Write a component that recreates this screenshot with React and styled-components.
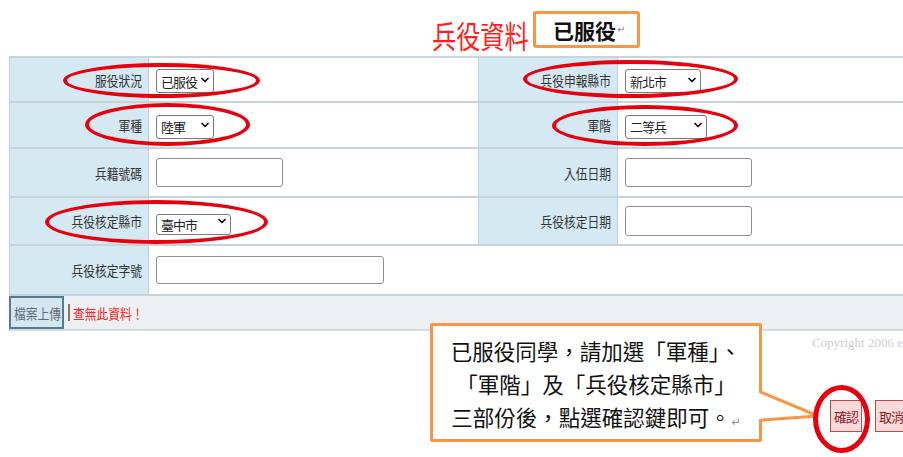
import React from 'react';
import styled, { createGlobalStyle } from 'styled-components';
import { ChevronDown } from 'lucide-react';

const GlobalStyle = createGlobalStyle`
  html, body {
    margin: 0;
    padding: 0;
    background: #fff;
  }
  body {
    font-family: "Noto Sans CJK TC", "Liberation Sans", sans-serif;
    overflow: hidden;
  }
`;

const Page = styled.div`
  position: relative;
  width: 903px;
  height: 457px;
  overflow: hidden;
`;

const Header = styled.header`
  display: flex;
  align-items: flex-end;
  gap: 9px;
  height: 56px;
  padding-left: 432px;
  box-sizing: border-box;
`;

/* the source shot is squeezed sideways, so narrow the glyphs the same way */
const Title = styled.h1`
  display: inline-block;
  margin: 0 -32px 3px 0;
  font-size: 31px;
  line-height: 36px;
  font-weight: 400;
  color: #ff1e1e;
  transform: scaleX(0.78);
  transform-origin: left center;
`;

const StatusBox = styled.div`
  display: flex;
  align-items: center;
  width: 107px;
  height: 37px;
  margin-bottom: 8px;
  padding-left: 17px;
  box-sizing: border-box;
  border: 3px solid #f79646;
  border-radius: 3px;
  font-size: 21px;
  font-weight: 700;
  color: #111;
`;

const Mark = styled.span`
  font-family: "DejaVu Sans", sans-serif;
  font-size: ${p => p.size || 10}px;
  font-weight: 400;
  color: #8a8a8a;
  margin-left: 1px;
`;

const Table = styled.div`
  margin-left: 9px;
  width: 920px;
  border-top: 2px solid #c9d5dc;
`;

const Row = styled.div`
  display: grid;
  grid-template-columns: 140px 329px 140px 1fr;
  height: ${p => p.h}px;
  box-sizing: border-box;
  border-bottom: 2px solid #c6d3da;
`;

const Label = styled.div`
  display: flex;
  align-items: center;
  justify-content: flex-end;
  padding-right: 6px;
  background: #d5e9f2;
  border-left: 1px solid #bdd1db;
  border-right: 1px solid #bdd1db;
`;

const Squeezed = styled.span`
  display: inline-block;
  white-space: nowrap;
  font-size: ${p => p.size || 14}px;
  color: ${p => p.color || '#333'};
  transform: scaleX(0.84);
  transform-origin: ${p => p.origin || 'right'} center;
`;

const Value = styled.div`
  display: flex;
  align-items: center;
  padding-left: 7px;
  background: #fff;
  grid-column: ${p => (p.wide ? 'span 3' : 'auto')};
`;

const SelectWrap = styled.span`
  position: relative;
  display: inline-block;
  width: ${p => p.w}px;
  height: ${p => p.h || 24}px;
`;

const SelectBox = styled.select`
  appearance: none;
  width: 100%;
  height: 100%;
  margin: 0;
  padding: 0 0 0 4px;
  box-sizing: border-box;
  border: 1px solid #7b7b7b;
  border-radius: 3px;
  background: #fff;
  font-family: "Noto Sans CJK TC", sans-serif;
  font-size: 13px;
  letter-spacing: -1px;
  color: #222;
`;

const Chevron = styled(ChevronDown)`
  position: absolute;
  right: 3px;
  top: 50%;
  margin-top: -6px;
  pointer-events: none;
`;

const TextInput = styled.input`
  width: ${p => p.w}px;
  height: ${p => p.h || 29}px;
  margin: 0;
  box-sizing: border-box;
  border: 1px solid #8e8e8e;
  border-radius: 3px;
  background: #fff;
`;

const Footer = styled.div`
  display: flex;
  align-items: center;
  height: 35px;
  box-sizing: border-box;
  background: #ecf0f3;
  border-bottom: 2px solid #d3dce1;
`;

const UploadButton = styled.button`
  width: 55px;
  height: 100%;
  padding: 0 0 0 3px;
  box-sizing: border-box;
  border: 2px solid #547b8f;
  background: #d4e6f0;
  font-family: "Noto Sans CJK TC", sans-serif;
  text-align: left;
`;

const Divider = styled.span`
  width: 2px;
  height: 17px;
  margin-left: 4px;
  background: #8b7660;
`;

const ErrorSlot = styled.span`
  margin-left: 3px;
  display: flex;
`;

const Copyright = styled.div`
  margin-top: 4px;
  padding-left: 812px;
  white-space: nowrap;
  font-family: "Liberation Serif", serif;
  font-size: 13px;
  line-height: 15px;
  color: #cfcfcf;
`;

const ButtonRow = styled.div`
  display: flex;
  gap: 13px;
  margin-top: 50px;
  padding-left: 830px;
`;

const ActionButton = styled.button`
  flex: none;
  width: 32px;
  height: 32px;
  padding: 0;
  border: 1px solid #b54a4a;
  background: #fdd9da;
  font-family: "Noto Sans CJK TC", sans-serif;
  font-size: 13px;
  letter-spacing: -1px;
  color: #8a1f1f;
`;

const Callout = styled.div`
  position: absolute;
  left: 430px;
  top: 323px;
  width: 332px;
  height: 119px;
  padding-top: 8px;
  box-sizing: border-box;
  border: 3px solid #f79646;
  border-radius: 2px;
  background: #fff;
  text-align: center;
  font-size: 21.5px;
  line-height: 33px;
  color: #111;
`;

const Tail = styled.svg`
  position: absolute;
  left: 758px;
  top: 388px;
`;

const Ring = styled.div`
  position: absolute;
  left: ${p => p.x}px;
  top: ${p => p.y}px;
  width: ${p => p.w}px;
  height: ${p => p.h}px;
  box-sizing: border-box;
  border: ${p => p.stroke || 4}px solid #e8000d;
  border-radius: 50%;
  pointer-events: none;
`;

const Dropdown = ({ w, h, value }) => (
  <SelectWrap w={w} h={h}>
    <SelectBox defaultValue={value}>
      <option>{value}</option>
    </SelectBox>
    <Chevron size={12} strokeWidth={3.5} color="#111" />
  </SelectWrap>
);

const Field = ({ children }) => (
  <Label>
    <Squeezed>{children}</Squeezed>
  </Label>
);

const rings = [
  { x: 63, y: 63, w: 197, h: 35 },
  { x: 85, y: 103, w: 165, h: 43 },
  { x: 523, y: 60, w: 215, h: 38 },
  { x: 552, y: 105, w: 186, h: 41 },
  { x: 45, y: 200, w: 223, h: 44 },
  { x: 813, y: 385, w: 57, h: 68, stroke: 5 }
];

export default function App() {
  return (
    <Page>
      <GlobalStyle />
      <Header>
        <Title>兵役資料</Title>
        <StatusBox>
          已服役<Mark>↵</Mark>
        </StatusBox>
      </Header>

      <Table>
        <Row h={45}>
          <Field>服役狀況</Field>
          <Value><Dropdown w={58} value="已服役" /></Value>
          <Field>兵役申報縣市</Field>
          <Value><Dropdown w={76} value="新北市" /></Value>
        </Row>
        <Row h={46}>
          <Field>軍種</Field>
          <Value><Dropdown w={58} value="陸軍" /></Value>
          <Field>軍階</Field>
          <Value><Dropdown w={82} value="二等兵" /></Value>
        </Row>
        <Row h={49}>
          <Field>兵籍號碼</Field>
          <Value><TextInput w={127} /></Value>
          <Field>入伍日期</Field>
          <Value><TextInput w={127} /></Value>
        </Row>
        <Row h={48}>
          <Field>兵役核定縣市</Field>
          <Value><Dropdown w={75} h={21} value="臺中市" /></Value>
          <Field>兵役核定日期</Field>
          <Value><TextInput w={127} h={30} /></Value>
        </Row>
        <Row h={50}>
          <Field>兵役核定字號</Field>
          <Value wide><TextInput w={228} h={28} /></Value>
        </Row>
        <Footer>
          <UploadButton>
            <Squeezed origin="left" color="#5d6f7e">檔案上傳</Squeezed>
          </UploadButton>
          <Divider />
          <ErrorSlot>
            <Squeezed origin="left" color="#ff2323">查無此資料！</Squeezed>
          </ErrorSlot>
        </Footer>
      </Table>

      <Copyright>Copyright 2006 eoffice</Copyright>
      <ButtonRow>
        <ActionButton>確認</ActionButton>
        <ActionButton>取消</ActionButton>
      </ButtonRow>

      <Callout>
        已服役同學，請加選「軍種」、<br />
        「軍階」及「兵役核定縣市」<br />
        三部份後，點選確認鍵即可。<Mark size={11}>↵</Mark>
      </Callout>
      <Tail width="64" height="36" viewBox="0 0 64 36">
        <rect x="0" y="5" width="6" height="26" fill="#fff" />
        <polyline
          points="2.5,4 60,28 2.5,32"
          fill="#fff"
          stroke="#f79646"
          strokeWidth="3"
          strokeLinejoin="miter"
        />
      </Tail>

      {rings.map((r, i) => (
        <Ring key={i} {...r} />
      ))}
    </Page>
  );
}
